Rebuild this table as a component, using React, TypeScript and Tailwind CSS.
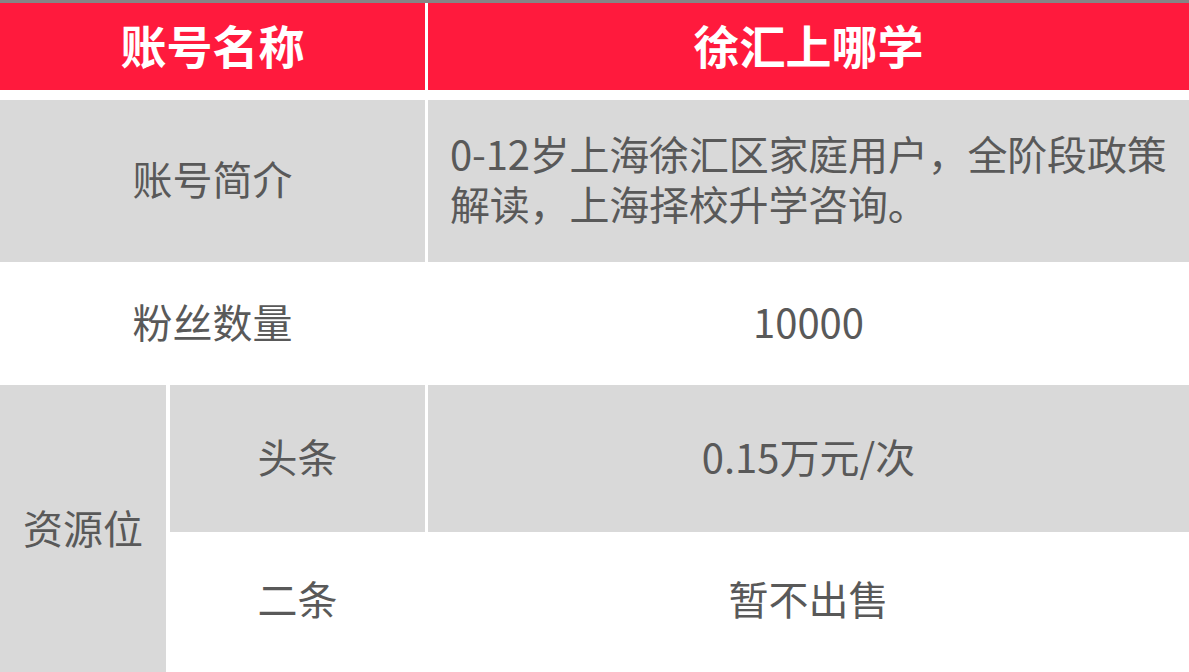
import React from 'react';

const cellText = 'text-[40px] text-[#595959] leading-[50px] pb-[6px]';

const App = () => {
  return (
    <div className="w-[1189px] h-[672px] overflow-hidden bg-white font-['Noto_Sans_CJK_SC','Noto_Sans',sans-serif]">
      <div className="h-[3px] bg-[#858585]" />

      {/* 表头 */}
      <div className="grid grid-cols-[425px_1fr] h-[87px] bg-[#ff1a3d] mb-[10px]">
        <div className="flex items-center justify-center pb-[4px] text-[46px] font-bold text-white">
          账号名称
        </div>
        <div className="flex items-center justify-center pb-[4px] text-[46px] font-bold text-white border-l-[3px] border-white">
          徐汇上哪学
        </div>
      </div>

      {/* 账号简介 */}
      <div className="grid grid-cols-[425px_1fr] h-[162px] bg-[#d9d9d9]">
        <div className={`flex items-center justify-center ${cellText}`}>
          账号简介
        </div>
        <div className={`flex items-center pl-[22px] border-l-[3px] border-white ${cellText}`}>
          <p className="whitespace-nowrap tracking-[-0.2px]">
            0-12岁上海徐汇区家庭用户，全阶段政策
            <br />
            解读，上海择校升学咨询。
          </p>
        </div>
      </div>

      {/* 粉丝数量 */}
      <div className="grid grid-cols-[425px_1fr] h-[123px] bg-white">
        <div className={`flex items-center justify-center ${cellText}`}>
          粉丝数量
        </div>
        <div className={`flex items-center justify-center border-l-[3px] border-white ${cellText}`}>
          10000
        </div>
      </div>

      {/* 资源位 */}
      <div className="grid grid-cols-[166px_1fr] h-[290px]">
        <div className={`flex items-center justify-center bg-[#d9d9d9] ${cellText}`}>
          资源位
        </div>
        <div className="flex flex-col border-l-4 border-white">
          <div className="grid grid-cols-[255px_1fr] h-[147px] bg-[#d9d9d9]">
            <div className={`flex items-center justify-center ${cellText}`}>
              头条
            </div>
            <div className={`flex items-center justify-center border-l-[3px] border-white ${cellText}`}>
              0.15万元/次
            </div>
          </div>
          <div className="grid grid-cols-[255px_1fr] h-[136px] mt-px bg-white">
            <div className={`flex items-center justify-center ${cellText}`}>
              二条
            </div>
            <div className={`flex items-center justify-center border-l-[3px] border-white ${cellText}`}>
              暂不出售
            </div>
          </div>
        </div>
      </div>
    </div>
  );
};

export default App;
